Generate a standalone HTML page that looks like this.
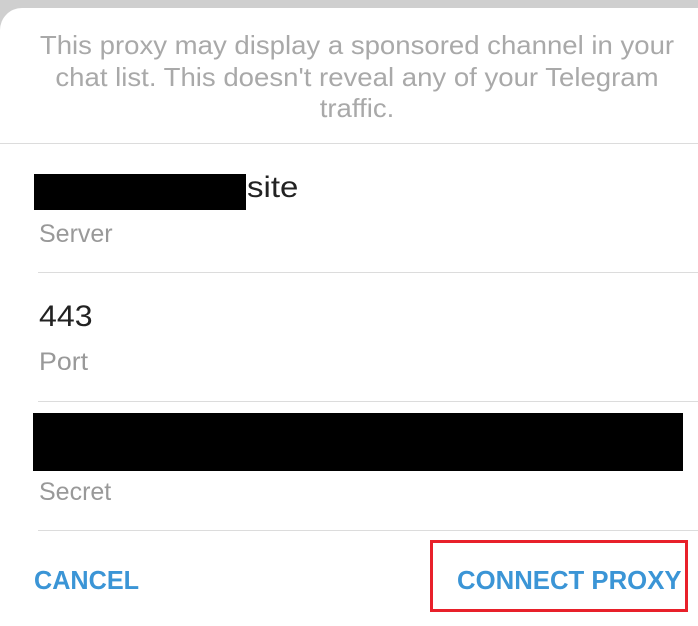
<!DOCTYPE html>
<html><head><style>
body{margin:0;width:698px;height:626px;background:#cfcfcf;position:relative;overflow:hidden;font-family:"Liberation Sans",sans-serif}
.card{position:absolute;left:0;top:8px;width:698px;height:618px;background:#fff;border-top-left-radius:22px}
.t{position:absolute;white-space:nowrap;transform-origin:0 50%}
.line{position:absolute;height:1px;background:#dcdcdc;right:0}
.blk{position:absolute;background:#000}
.c{transform:scaleX(1.06);transform-origin:50% 50%;white-space:nowrap}
</style></head><body>
<div class="card"></div>
<div class="t" style="left:8px;width:698px;top:30px;text-align:center;color:#a9a9a9;font-size:26px;line-height:31.5px;white-space:normal">
<div class="c">This proxy may display a sponsored channel in your</div>
<div class="c">chat list. This doesn't reveal any of your Telegram</div>
<div class="c">traffic.</div>
</div>
<div class="line" style="left:0;top:143px"></div>
<div class="blk" style="left:34px;top:174px;width:212px;height:36px"></div>
<div class="t" style="left:247px;top:171px;font-size:30px;color:#222;transform:scaleX(1.1)">site</div>
<div class="t" style="left:39px;top:220px;font-size:25px;color:#999;transform:scaleX(1.0)">Server</div>
<div class="line" style="left:38px;top:272px"></div>
<div class="t" style="left:39px;top:300px;font-size:30px;color:#222;transform:scaleX(1.07)">443</div>
<div class="t" style="left:39px;top:348px;font-size:25px;color:#999;transform:scaleX(1.07)">Port</div>
<div class="line" style="left:38px;top:401px"></div>
<div class="blk" style="left:33px;top:413px;width:650px;height:58px"></div>
<div class="t" style="left:39px;top:478px;font-size:25px;color:#999;transform:scaleX(1.0)">Secret</div>
<div class="line" style="left:38px;top:530px"></div>
<div class="t" style="left:34px;top:565px;font-size:26px;font-weight:bold;color:#3b95d6;transform:scaleX(0.97)">CANCEL</div>
<div style="position:absolute;left:430px;top:540px;width:252px;height:66px;border:3px solid #e8202a"></div>
<div class="t" style="left:457px;top:565px;font-size:26px;font-weight:bold;color:#3b95d6;transform:scaleX(0.99)">CONNECT PROXY</div>
</body></html>
